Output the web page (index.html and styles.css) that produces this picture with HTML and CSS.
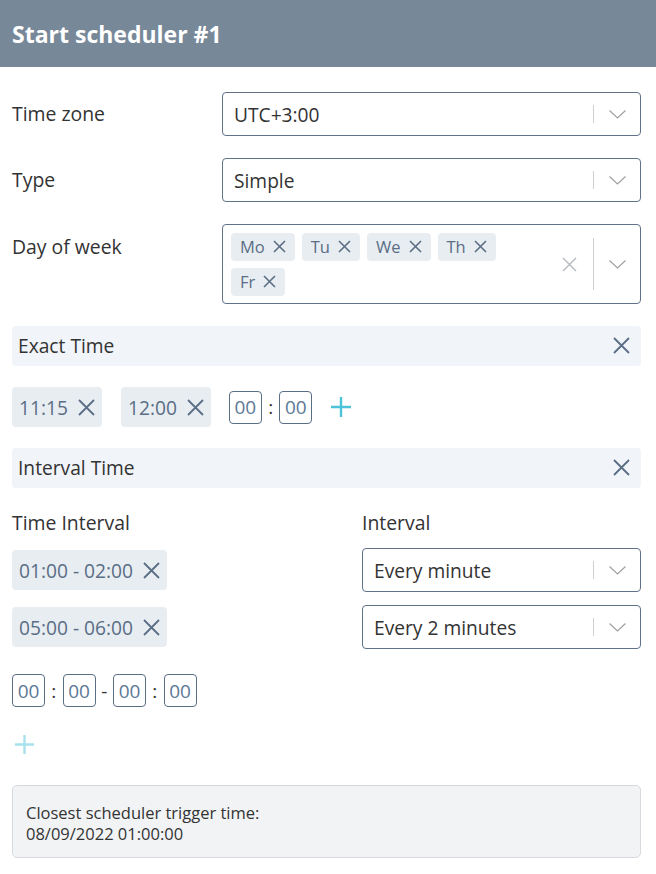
FILE: index.html
```html
<!DOCTYPE html>
<html>
<head>
<meta charset="utf-8">
<link rel="stylesheet" href="styles.css">
</head>
<body>
<div class="header">Start scheduler #1</div>
<div class="content">
  <div class="field">
    <div class="label">Time zone</div>
    <div class="select">
      <span class="value">UTC+3:00</span>
      <span class="sep"></span>
      <span class="chev"><svg width="17" height="9" viewBox="0 0 17 9"><polyline points="0.5,0.5 8.5,8 16.5,0.5" fill="none" stroke="#a0a0a0" stroke-width="1.2"/></svg></span>
    </div>
  </div>
  <div class="field">
    <div class="label">Type</div>
    <div class="select">
      <span class="value">Simple</span>
      <span class="sep"></span>
      <span class="chev"><svg width="17" height="9" viewBox="0 0 17 9"><polyline points="0.5,0.5 8.5,8 16.5,0.5" fill="none" stroke="#a0a0a0" stroke-width="1.2"/></svg></span>
    </div>
  </div>
  <div class="field field-top">
    <div class="label label-top">Day of week</div>
    <div class="multi">
      <div class="values">
        <span class="chip">Mo<svg width="13" height="13" viewBox="0 0 13 13"><path d="M1 1L12 12M12 1L1 12" stroke="#5a6e85" stroke-width="1.6"/></svg></span>
        <span class="chip">Tu<svg width="13" height="13" viewBox="0 0 13 13"><path d="M1 1L12 12M12 1L1 12" stroke="#5a6e85" stroke-width="1.6"/></svg></span>
        <span class="chip">We<svg width="13" height="13" viewBox="0 0 13 13"><path d="M1 1L12 12M12 1L1 12" stroke="#5a6e85" stroke-width="1.6"/></svg></span>
        <span class="chip">Th<svg width="13" height="13" viewBox="0 0 13 13"><path d="M1 1L12 12M12 1L1 12" stroke="#5a6e85" stroke-width="1.6"/></svg></span>
        <span class="chip">Fr<svg width="13" height="13" viewBox="0 0 13 13"><path d="M1 1L12 12M12 1L1 12" stroke="#5a6e85" stroke-width="1.6"/></svg></span>
      </div>
      <span class="clear"><svg width="15" height="15" viewBox="0 0 15 15"><path d="M1 1L14 14M14 1L1 14" stroke="#b4b9bf" stroke-width="1.4"/></svg></span>
      <span class="sep sep-tall"></span>
      <span class="chev"><svg width="17" height="9" viewBox="0 0 17 9"><polyline points="0.5,0.5 8.5,8 16.5,0.5" fill="none" stroke="#a0a0a0" stroke-width="1.2"/></svg></span>
    </div>
  </div>

  <div class="bar">
    <span>Exact Time</span>
    <svg width="17" height="17" viewBox="0 0 17 17"><path d="M1 1L16 16M16 1L1 16" stroke="#5a6e85" stroke-width="1.8"/></svg>
  </div>

  <div class="exact-row">
    <span class="tag">11:15<svg width="17" height="17" viewBox="0 0 17 17"><path d="M1 1L16 16M16 1L1 16" stroke="#5a6e85" stroke-width="1.8"/></svg></span>
    <span class="tag">12:00<svg width="17" height="17" viewBox="0 0 17 17"><path d="M1 1L16 16M16 1L1 16" stroke="#5a6e85" stroke-width="1.8"/></svg></span>
    <div class="time">
      <span class="box">00</span><span class="punct">:</span><span class="box">00</span>
    </div>
    <svg class="plus" width="22" height="22" viewBox="0 0 22 22"><path d="M11 1V21M1 11H21" stroke="#4cc3d8" stroke-width="2.4"/></svg>
  </div>

  <div class="bar">
    <span>Interval Time</span>
    <svg width="17" height="17" viewBox="0 0 17 17"><path d="M1 1L16 16M16 1L1 16" stroke="#5a6e85" stroke-width="1.8"/></svg>
  </div>

  <div class="interval-grid">
    <div class="label">Time Interval</div>
    <div class="label">Interval</div>
    <div class="cell"><span class="tag">01:00 - 02:00<svg width="17" height="17" viewBox="0 0 17 17"><path d="M1 1L16 16M16 1L1 16" stroke="#5a6e85" stroke-width="1.8"/></svg></span></div>
    <div class="select">
      <span class="value">Every minute</span>
      <span class="sep"></span>
      <span class="chev"><svg width="17" height="9" viewBox="0 0 17 9"><polyline points="0.5,0.5 8.5,8 16.5,0.5" fill="none" stroke="#a0a0a0" stroke-width="1.2"/></svg></span>
    </div>
    <div class="cell"><span class="tag">05:00 - 06:00<svg width="17" height="17" viewBox="0 0 17 17"><path d="M1 1L16 16M16 1L1 16" stroke="#5a6e85" stroke-width="1.8"/></svg></span></div>
    <div class="select">
      <span class="value">Every 2 minutes</span>
      <span class="sep"></span>
      <span class="chev"><svg width="17" height="9" viewBox="0 0 17 9"><polyline points="0.5,0.5 8.5,8 16.5,0.5" fill="none" stroke="#a0a0a0" stroke-width="1.2"/></svg></span>
    </div>
  </div>

  <div class="time range">
    <span class="box">00</span><span class="punct">:</span><span class="box">00</span><span class="punct">-</span><span class="box">00</span><span class="punct">:</span><span class="box">00</span>
  </div>

  <svg class="plus-dim" width="21" height="21" viewBox="0 0 21 21"><path d="M10.5 1V20M1 10.5H20" stroke="#a8e2ec" stroke-width="2.4"/></svg>

  <div class="info">
    Closest scheduler trigger time:<br>08/09/2022 01:00:00
  </div>
</div>
</body>
</html>
```

FILE: styles.css
```css
* { box-sizing: border-box; }
body {
  margin: 0;
  font-family: "Open Sans", "Noto Sans", sans-serif;
  color: #333;
  background: #fff;
}
.header {
  height: 67px;
  background: #778899;
  color: #fff;
  font-weight: 700;
  font-size: 23px;
  padding-left: 12px;
  display: flex;
  align-items: center;
}
.content {
  padding: 25px 15px 16px 12px;
  display: flex;
  flex-direction: column;
  align-items: stretch;
}
.field {
  display: grid;
  grid-template-columns: 210px 1fr;
  align-items: center;
  margin-bottom: 22px;
}
.field-top { align-items: start; }
.label {
  font-size: 19.4px;
  line-height: 26px;
  color: #333;
}
.label-top { padding-top: 10px; }
.select {
  height: 44px;
  border: 1px solid #5f7289;
  border-radius: 4px;
  display: flex;
  align-items: center;
  padding-left: 11px;
}
.value {
  flex: 1;
  font-size: 19.2px;
  color: #333;
}
.sep {
  width: 1px;
  height: 18px;
  background: #cfcfcf;
}
.sep-tall {
  height: auto;
  align-self: stretch;
  margin: 13px 0;
}
.chev {
  width: 46px;
  display: flex;
  justify-content: center;
  align-items: center;
}
.multi {
  min-height: 80px;
  border: 1px solid #5f7289;
  border-radius: 4px;
  display: flex;
  align-items: center;
}
.values {
  flex: 1;
  display: flex;
  flex-wrap: wrap;
  gap: 7px;
  padding: 8px 20px 7px 8px;
  align-self: flex-start;
}
.chip {
  height: 28px;
  display: inline-flex;
  align-items: center;
  gap: 8px;
  padding: 0 9px;
  background: #e8edf2;
  border-radius: 4px;
  font-size: 16.5px;
  line-height: 26px;
  padding-bottom: 1px;
  color: #5a6e85;
}
.clear {
  width: 28px;
  display: flex;
  justify-content: center;
  margin-right: 10px;
}
.bar {
  height: 40px;
  background: #f1f4f8;
  border-radius: 4px;
  display: flex;
  align-items: center;
  justify-content: space-between;
  padding: 0 11px 1px 6px;
  font-size: 19.2px;
  color: #333;
}
.exact-row {
  display: flex;
  align-items: center;
  margin: 21px 0 21px;
}
.tag {
  height: 40px;
  display: inline-flex;
  align-items: center;
  gap: 10px;
  padding: 0 7px;
  background: #e8edf2;
  border-radius: 4px;
  font-size: 19.2px;
  color: #5a6e85;
}
.exact-row .tag { margin-right: 19px; }
.exact-row .tag + .tag { margin-right: 18px; }
.time {
  display: flex;
  align-items: center;
}
.box {
  width: 33px;
  height: 33px;
  border: 1px solid #5a6e85;
  border-radius: 4px;
  display: inline-flex;
  align-items: center;
  justify-content: center;
  font-size: 19px;
  color: #5b7896;
}
.punct {
  width: 17.5px;
  text-align: center;
  font-size: 19px;
  color: #333;
}
.plus { margin-left: 18px; }
.interval-grid {
  display: grid;
  grid-template-columns: 350px 1fr;
  grid-auto-rows: auto;
  row-gap: 13px;
  margin-top: 22px;
}
.interval-grid .label { margin-bottom: -1px; }
.cell {
  display: flex;
  align-items: center;
}
.range { margin-top: 25px; }
.plus-dim {
  align-self: flex-start;
  margin: 27px 0 0 2px;
}
.info {
  margin-top: 30px;
  background: #f2f3f5;
  border: 1px solid #d6d9de;
  border-radius: 5px;
  padding: 16px 13px 13px;
  font-size: 16.5px;
  line-height: 21px;
  color: #333;
}
```
